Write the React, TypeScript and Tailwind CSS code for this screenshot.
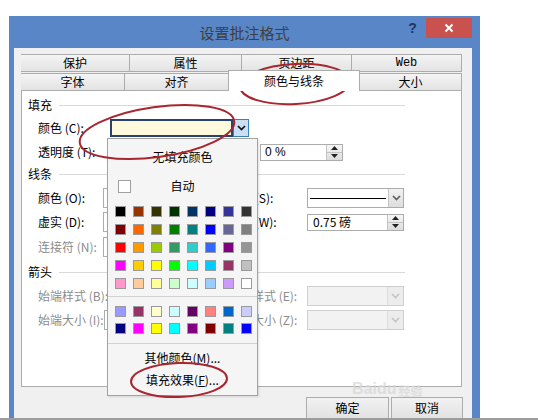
import React from 'react';

const TOP_COLORS = [
  ['bg-[#000000]', 'bg-[#993300]', 'bg-[#333300]', 'bg-[#003300]', 'bg-[#003366]', 'bg-[#000080]', 'bg-[#333399]', 'bg-[#333333]'],
  ['bg-[#800000]', 'bg-[#ff6600]', 'bg-[#808000]', 'bg-[#008000]', 'bg-[#008080]', 'bg-[#0000ff]', 'bg-[#666699]', 'bg-[#808080]'],
  ['bg-[#ff0000]', 'bg-[#ff9900]', 'bg-[#99cc00]', 'bg-[#339966]', 'bg-[#33cccc]', 'bg-[#3366ff]', 'bg-[#800080]', 'bg-[#969696]'],
  ['bg-[#ff00ff]', 'bg-[#ffcc00]', 'bg-[#ffff00]', 'bg-[#00ff00]', 'bg-[#00ffff]', 'bg-[#00ccff]', 'bg-[#993366]', 'bg-[#c0c0c0]'],
  ['bg-[#ff99cc]', 'bg-[#ffcc99]', 'bg-[#ffff99]', 'bg-[#ccffcc]', 'bg-[#ccffff]', 'bg-[#99ccff]', 'bg-[#cc99ff]', 'bg-[#ffffff]'],
];

const CHART_COLORS = [
  ['bg-[#9999ff]', 'bg-[#993366]', 'bg-[#ffffcc]', 'bg-[#ccffff]', 'bg-[#660066]', 'bg-[#ff8080]', 'bg-[#0066cc]', 'bg-[#ccccff]'],
  ['bg-[#000080]', 'bg-[#ff00ff]', 'bg-[#ffff00]', 'bg-[#00ffff]', 'bg-[#800080]', 'bg-[#800000]', 'bg-[#008080]', 'bg-[#0000ff]'],
];

function Chevron({ color }: { color: string }) {
  return (
    <svg width="9" height="6" viewBox="0 0 9 6">
      <path d="M1 1l3.5 3.5L8 1" fill="none" stroke={color} strokeWidth="1.7" />
    </svg>
  );
}

function Spin() {
  return (
    <div className="flex flex-col w-[16px] h-full border-l border-[#c4c4c4] bg-linear-to-b from-[#f6f6f6] to-[#dcdcdc]">
      <div className="flex-1 flex items-center justify-center border-b border-[#c4c4c4]">
        <svg width="7" height="4" viewBox="0 0 7 4"><path d="M0 4L3.5 0L7 4Z" fill="#222" /></svg>
      </div>
      <div className="flex-1 flex items-center justify-center">
        <svg width="7" height="4" viewBox="0 0 7 4"><path d="M0 0L3.5 4L7 0Z" fill="#222" /></svg>
      </div>
    </div>
  );
}

function Section({ title, h }: { title: string; h: string }) {
  return (
    <div className={`flex items-center pl-[6px] mr-[56px] ${h}`}>
      <span>{title}</span>
      <div className="flex-1 ml-[7px] h-px bg-[#d9d9d9]" />
    </div>
  );
}

function Dropdown({ disabled }: { disabled?: boolean }) {
  return (
    <div className={`flex w-[97px] h-[20px] border ${disabled ? 'border-[#cfcfcf] bg-[#f2f2f2]' : 'border-[#acacac] bg-white'}`}>
      <div className="flex-1 flex items-center px-[2px]">
        {!disabled && <div className="w-[76px] h-px bg-black" />}
      </div>
      <div className={`w-[16px] flex items-center justify-center border-l ${disabled ? 'border-[#dcdcdc] bg-[#ececec]' : 'border-[#c4c4c4] bg-linear-to-b from-[#f2f2f2] to-[#dddddd]'}`}>
        <Chevron color={disabled ? '#c4c4c4' : '#606060'} />
      </div>
    </div>
  );
}

function LeftField({ label, disabled }: { label: string; disabled?: boolean }) {
  return (
    <div className="w-[206px] flex items-center pl-[16px]">
      <span className={`w-[72px] whitespace-nowrap ${disabled ? 'text-[#8c8c8c]' : ''}`}>{label}</span>
      <div className="w-[139px] h-[20px] border border-[#acacac] bg-white" />
    </div>
  );
}

function Panel() {
  return (
    <div className="relative w-[441px] h-[297px] border border-[#adadad] bg-white pt-[3px]">
      <Section title="填充" h="h-[22px]" />
      <div className="flex items-center h-[24px] pl-[16px]">
        <span className="w-[72px]">颜色 (C):</span>
        <div className="flex h-[18px]">
          <div className="w-[123px] border-2 border-[#28416e] bg-[#fffadb]" />
          <div className="w-[16px] flex items-center justify-center bg-[#c8dff5] border border-[#3c7fb1]">
            <Chevron color="#111" />
          </div>
        </div>
      </div>
      <div className="flex items-center h-[24px] pl-[16px]">
        <span className="w-[222px]">透明度 (T):</span>
        <div className="flex w-[83px] h-[17px] border border-[#acacac] bg-white">
          <span className="flex-1 flex items-center pl-[4px] font-['Liberation_Sans',sans-serif]">0 %</span>
          <Spin />
        </div>
      </div>
      <Section title="线条" h="h-[20px]" />
      <div className="flex items-center h-[28px]">
        <LeftField label="颜色 (O):" />
        <span className="w-[79px] whitespace-nowrap">线型 (S):</span>
        <Dropdown />
      </div>
      <div className="flex items-center h-[20px]">
        <LeftField label="虚实 (D):" />
        <span className="w-[79px] whitespace-nowrap">粗细 (W):</span>
        <div className="flex w-[97px] h-[17px] border border-[#acacac] bg-white">
          <span className="flex-1 flex items-center pl-[5px]">0.75 磅</span>
          <Spin />
        </div>
      </div>
      <div className="flex items-center h-[30px]">
        <LeftField label="连接符 (N):" disabled />
      </div>
      <Section title="箭头" h="h-[20px]" />
      <div className="flex items-center h-[28px]">
        <LeftField label="始端样式 (B):" disabled />
        <span className="w-[79px] whitespace-nowrap text-[#8c8c8c]">末端样式 (E):</span>
        <Dropdown disabled />
      </div>
      <div className="flex items-center h-[20px]">
        <LeftField label="始端大小 (I):" disabled />
        <span className="w-[79px] whitespace-nowrap text-[#8c8c8c]">末端大小 (Z):</span>
        <Dropdown disabled />
      </div>
    </div>
  );
}

function Tabs() {
  const back = 'flex items-center justify-center h-[18px] border border-l-0 border-[#acacac] bg-linear-to-b from-[#f4f4f4] to-[#e3e3e3]';
  const front = 'flex items-center justify-center h-[17px] border border-b-0 border-l-0 border-[#acacac] bg-linear-to-b from-[#f4f4f4] to-[#e3e3e3]';
  return (
    <div className="w-[441px]">
      <div className="flex">
        <div className={`${back} w-[109px] border-l`}>保护</div>
        <div className={`${back} w-[112px]`}>属性</div>
        <div className={`${back} w-[110px]`}>页边距</div>
        <div className={`${back} w-[110px] font-['Liberation_Mono',monospace]`}>Web</div>
      </div>
      <div className="flex items-end h-[18px]">
        <div className={`${front} w-[104px] border-l`}>字体</div>
        <div className={`${front} w-[104px]`}>对齐</div>
        <div className="relative z-10 -ml-px mb-[-1px] w-[132px] h-[21px] flex items-center justify-center border border-b-0 border-[#acacac] bg-white">
          颜色与线条
        </div>
        <div className={`${front} w-[102px]`}>大小</div>
      </div>
    </div>
  );
}

function Swatches({ rows, gapY }: { rows: string[][]; gapY: string }) {
  return (
    <div className={`flex flex-col self-start pl-[7px] ${gapY}`}>
      {rows.map((row, i) => (
        <div key={i} className="flex gap-x-[7px]">
          {row.map((c, j) => (
            <div key={j} className={`w-[11px] h-[11px] border border-[#9a9a9a] ${c}`} />
          ))}
        </div>
      ))}
    </div>
  );
}

function ColorPopup() {
  return (
    <div className="absolute left-[107px] top-[138px] w-[151px] h-[258px] border border-[#a3a3a3] bg-[#f5f5f5] shadow-[1px_1px_2px_rgba(0,0,0,0.12)] flex flex-col items-center">
      <div className="h-[36px] flex items-center">无填充颜色</div>
      <div className="w-full h-[22px] grid grid-cols-[1fr_auto_1fr] items-center">
        <div className="pl-[10px]">
          <div className="w-[13px] h-[13px] border border-[#a0a0a0] bg-white" />
        </div>
        <span>自动</span>
        <div />
      </div>
      <div className="mt-[9px] self-stretch">
        <Swatches rows={TOP_COLORS} gapY="gap-y-[7px]" />
      </div>
      <div className="mt-[7px] self-stretch h-px bg-[#d2d2d2]" />
      <div className="mt-[9px] self-stretch">
        <Swatches rows={CHART_COLORS} gapY="gap-y-[6px]" />
      </div>
      <div className="mt-[9px] self-stretch h-px bg-[#d2d2d2]" />
      <div className="mt-[3px] h-[22px] flex items-center">
        其他颜色(<span className="underline">M</span>)...
      </div>
      <div className="h-[22px] flex items-center">
        填充效果(<span className="underline">F</span>)...
      </div>
    </div>
  );
}

function TitleBar() {
  return (
    <div className="h-[32px] grid grid-cols-[1fr_auto_1fr]">
      <div />
      <div className="flex items-center text-[15px] text-[#3f3f3f]">设置批注格式</div>
      <div className="flex justify-end items-start pt-[2px] pr-[8px]">
        <div className="w-[27px] h-[20px] flex items-center justify-center text-[14px] font-bold text-[#1d355f] font-['Liberation_Sans',sans-serif]">?</div>
        <div className="w-[46px] h-[20px] flex items-center justify-center bg-[#c9524f]">
          <svg width="10" height="10" viewBox="0 0 10 10">
            <path d="M1.5 1.5L8.5 8.5M8.5 1.5L1.5 8.5" stroke="#fff" strokeWidth="2" />
          </svg>
        </div>
      </div>
    </div>
  );
}

function Buttons() {
  const btn = 'h-[22px] flex items-center justify-center border border-[#acacac] bg-linear-to-b from-[#f2f2f2] to-[#e2e2e2]';
  return (
    <div className="mt-[10px] flex justify-end gap-[2px] pr-[9px]">
      <div className={`${btn} w-[83px]`}>确定</div>
      <div className={`${btn} w-[72px]`}>取消</div>
    </div>
  );
}

function Annotations() {
  return (
    <svg className="absolute left-0 top-0 pointer-events-none" width="538" height="420" viewBox="0 0 538 420">
      <g fill="none" stroke="#a8262f" strokeWidth="2">
        <ellipse cx="157" cy="132" rx="78" ry="25" transform="rotate(-8 157 132)" />
        <ellipse cx="295" cy="84" rx="55" ry="20" transform="rotate(-3 295 84)" />
        <ellipse cx="179" cy="380" rx="48" ry="17" transform="rotate(-2 179 380)" />
      </g>
    </svg>
  );
}

export default function App() {
  return (
    <div className="relative w-[538px] h-[420px] overflow-hidden bg-white text-[12px] leading-none text-black font-['Noto_Sans_CJK_SC',sans-serif]">
      <div className="ml-[9px] mt-[16px] w-[471px] h-[402px] flex flex-col bg-[#5886c6]">
        <TitleBar />
        <div className="flex-1 overflow-hidden ml-[5px] mr-[8px] bg-[#f0f0f0] pt-[6px] pl-[7px]">
          <Tabs />
          <Panel />
          <Buttons />
        </div>
      </div>
      <div className="h-[2px] bg-[#9c9c9c]" />
      <ColorPopup />
      <div className="absolute left-[352px] top-[381px] flex items-end text-[16px] leading-none font-bold text-[#d6d6d6] opacity-70 font-['Liberation_Sans',sans-serif] pointer-events-none">
        Baidu<span className="ml-[2px] text-[12px] font-['Noto_Sans_CJK_SC',sans-serif]">经验</span>
      </div>
      <Annotations />
    </div>
  );
}
